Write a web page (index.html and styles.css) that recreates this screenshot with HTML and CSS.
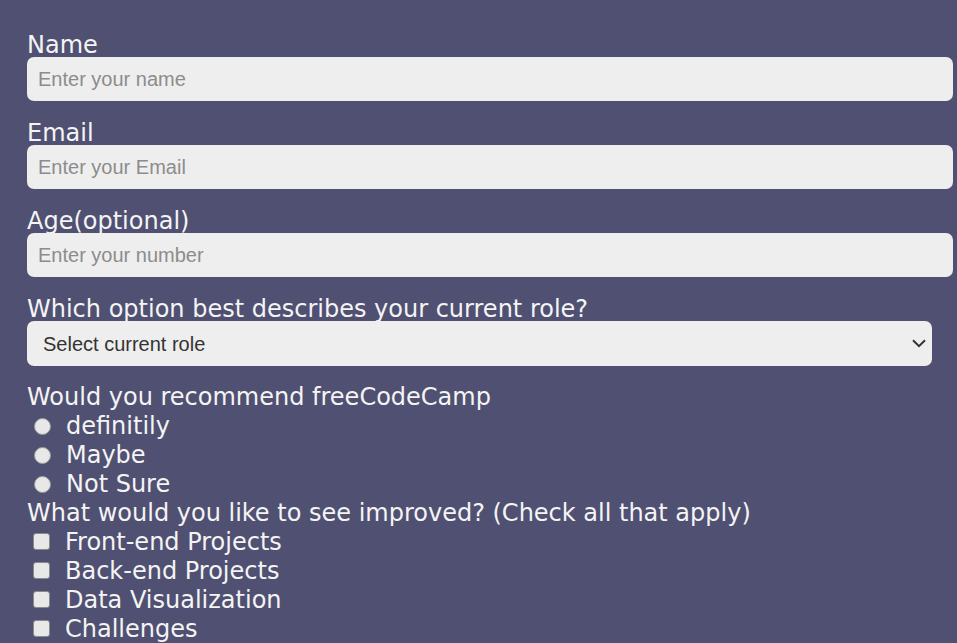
FILE: index.html
```html
<!DOCTYPE html>
<html lang="en">
<head>
<meta charset="utf-8">
<title>Survey Form</title>
<link rel="stylesheet" href="styles.css">
</head>
<body>
<form class="survey">
  <label class="field-label" for="name">Name</label>
  <input class="text-input" id="name" type="text" placeholder="Enter your name">

  <label class="field-label" for="email">Email</label>
  <input class="text-input" id="email" type="email" placeholder="Enter your Email">

  <label class="field-label" for="age">Age(optional)</label>
  <input class="text-input" id="age" type="number" placeholder="Enter your number">

  <label class="field-label" for="role">Which option best describes your current role?</label>
  <div class="select-wrap">
    <select class="role-select" id="role">
      <option>Select current role</option>
      <option>Student</option>
      <option>Full Time Job</option>
    </select>
    <svg class="chevron" width="14" height="9" viewBox="0 0 14 9" aria-hidden="true"><path d="M1 1.2 L7 7.2 L13 1.2" fill="none" stroke="#333" stroke-width="2"/></svg>
  </div>

  <p class="group-label">Would you recommend freeCodeCamp</p>
  <label class="choice"><input class="radio" type="radio" name="rec"><span>definitily</span></label>
  <label class="choice"><input class="radio" type="radio" name="rec"><span>Maybe</span></label>
  <label class="choice"><input class="radio" type="radio" name="rec"><span>Not Sure</span></label>

  <p class="group-label">What would you like to see improved? (Check all that apply)</p>
  <label class="choice"><input class="check" type="checkbox"><span>Front-end Projects</span></label>
  <label class="choice"><input class="check" type="checkbox"><span>Back-end Projects</span></label>
  <label class="choice"><input class="check" type="checkbox"><span>Data Visualization</span></label>
  <label class="choice"><input class="check" type="checkbox"><span>Challenges</span></label>
</form>
</body>
</html>
```

FILE: styles.css
```css
html, body {
  margin: 0;
  padding: 0;
  background: #505072;
}

body {
  font-family: "DejaVu Sans", Verdana, sans-serif;
  color: #f4f4f4;
}

.survey {
  display: flex;
  flex-direction: column;
  padding: 30px 4px 0 27px;
}

.field-label {
  display: block;
  padding-top: 4px;
  font-size: 24px;
  line-height: 23px;
}

.text-input {
  box-sizing: border-box;
  height: 44px;
  width: 100%;
  margin: 0 0 17px 0;
  padding: 0 11px;
  border: none;
  border-radius: 7px;
  background: #eeeeee;
  font-family: "Liberation Sans", Arial, sans-serif;
  font-size: 20px;
  color: #333;
  outline: none;
}

.text-input::placeholder {
  color: #8c8c8c;
}

.select-wrap {
  position: relative;
  width: 905px;
  margin: 0 0 17px 0;
}

.role-select {
  appearance: none;
  -webkit-appearance: none;
  display: block;
  box-sizing: border-box;
  height: 45px;
  width: 100%;
  margin: 0;
  padding: 0 40px 0 16px;
  border: none;
  border-radius: 7px;
  background: #eeeeee;
  font-family: "Liberation Sans", Arial, sans-serif;
  font-size: 20px;
  color: #333;
}

.chevron {
  position: absolute;
  right: 6px;
  top: 18px;
  pointer-events: none;
}

.group-label {
  margin: 0;
  font-size: 24px;
  line-height: 29px;
}

.choice {
  display: flex;
  align-items: center;
  font-size: 24px;
  line-height: 29px;
}

.radio {
  appearance: none;
  -webkit-appearance: none;
  box-sizing: border-box;
  width: 17px;
  height: 17px;
  margin: -1px 15px 0 7px;
  border-radius: 50%;
  background: #e8e8e8;
  border: 1px solid #9a9a9a;
}

.check {
  appearance: none;
  -webkit-appearance: none;
  box-sizing: border-box;
  width: 17px;
  height: 17px;
  margin: -2px 15px 0 6px;
  border-radius: 3px;
  background: #e8e8e8;
  border: 1px solid #8a8a8a;
}
```
